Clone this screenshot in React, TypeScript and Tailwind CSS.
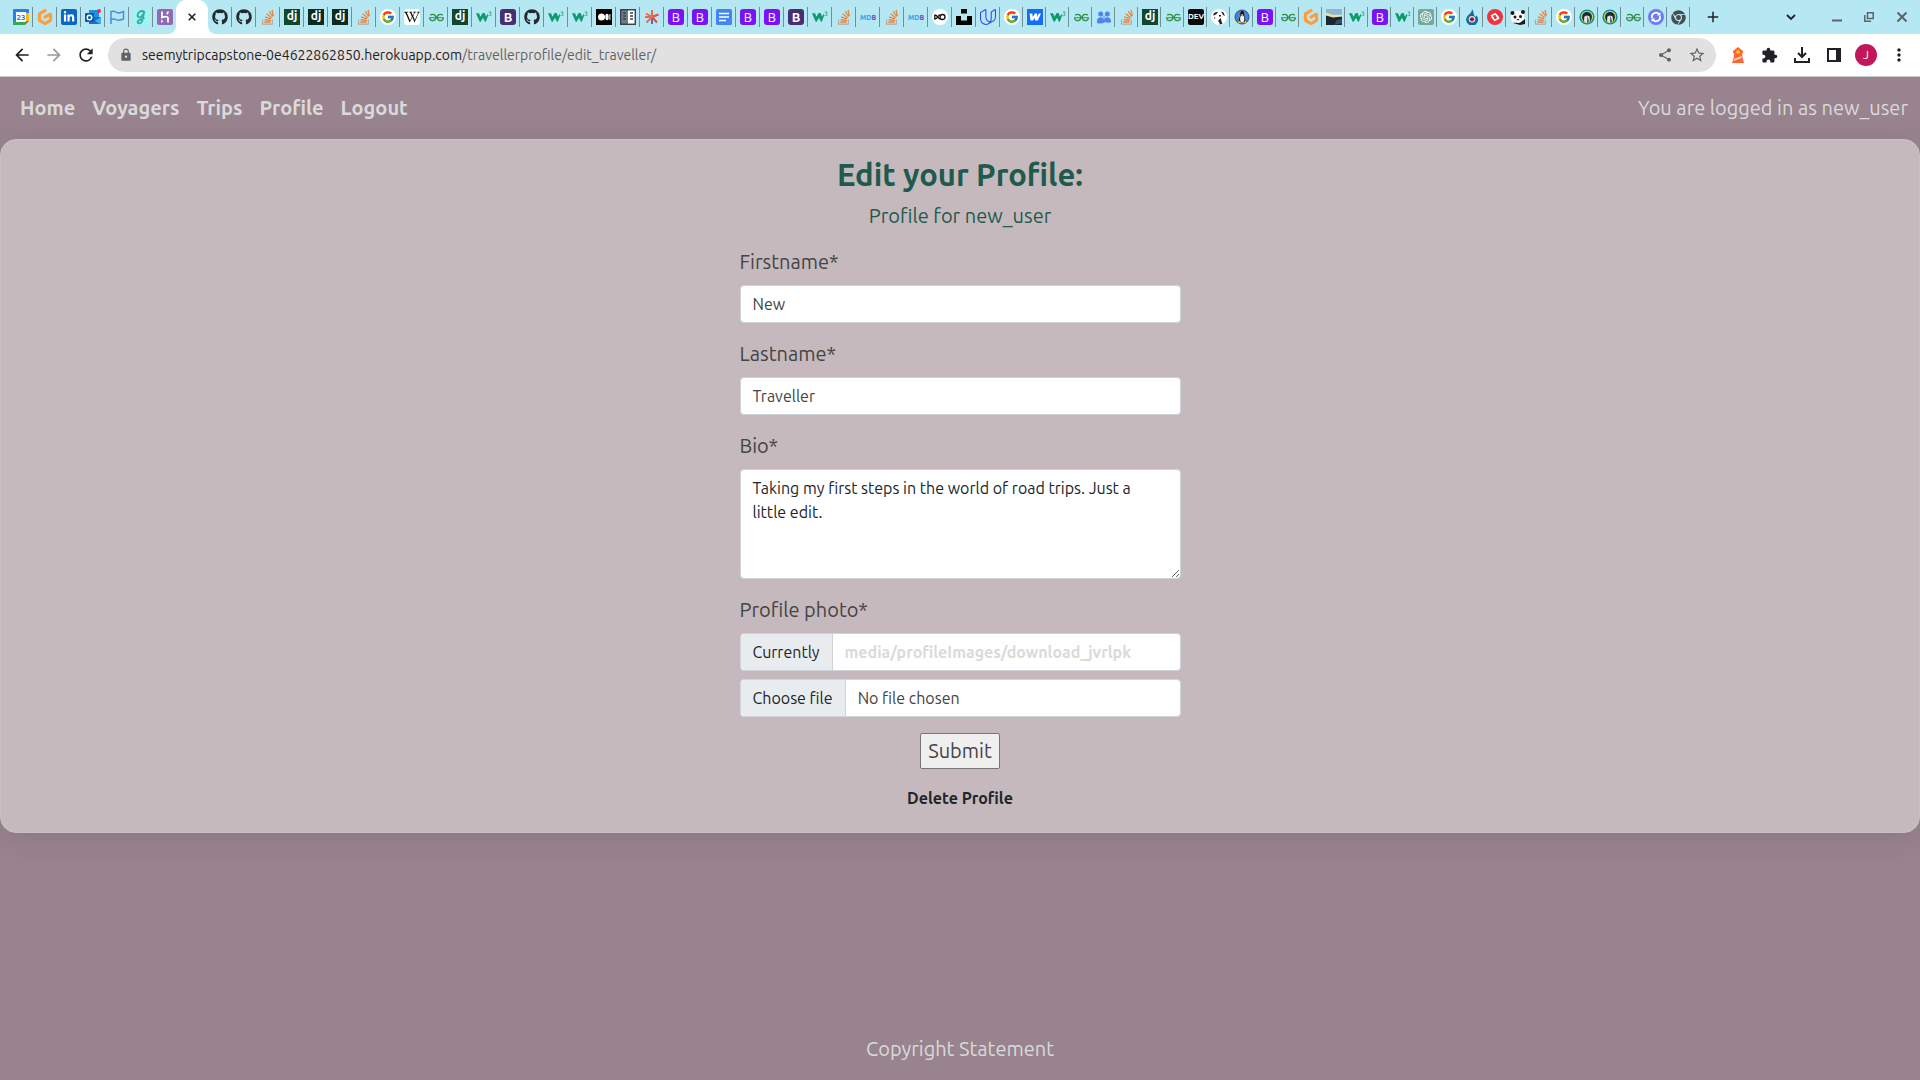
import type { ReactNode } from "react";
import { FaChrome, FaGithub, FaLinkedinIn, FaWikipediaW } from "react-icons/fa";
import { FcGoogle } from "react-icons/fc";
import { SiGeeksforgeeks, SiGitpod, SiOpenai, SiUdacity } from "react-icons/si";
import { MdArrowBack, MdArrowForward, MdExtension, MdLock, MdMoreVert, MdRefresh, MdShare, MdStarBorder, MdAdd } from "react-icons/md";

function Tile({ className, children }: { className: string; children?: ReactNode }) {
  return (
    <span className={`flex size-4 items-center justify-center overflow-hidden leading-none ${className}`}>
      {children}
    </span>
  );
}

const Svg = ({ children }: { children: ReactNode }) => (
  <svg viewBox="0 0 16 16" className="size-4">{children}</svg>
);

const github = <FaGithub className="size-4 text-[#24292f]" />;
const stack = (
  <Svg>
    <path d="M2.5 10.500v4.700h9.800v-4.700" fill="none" stroke="#b5a9a0" strokeWidth="1.200" />
    <path d="M4.300 13h6.200M4.500 10.600l6.100.9M5.100 7.800l5.900 2M6.600 4.800l5.100 3.900M9.200 2.300l3.600 5.200M12 .8l1.300 6" fill="none" stroke="#f08038" strokeWidth="1.300" />
  </Svg>
);
const django = (
  <Tile className="bg-[#11472f] pb-[2px] text-[12px] font-bold text-white">dj</Tile>
);
const djangoDark = (
  <Tile className="bg-[#0c2b20] pb-[2px] text-[12px] font-bold text-white">dj</Tile>
);
const google = (
  <Tile className="rounded-full bg-white"><FcGoogle className="size-[14px]" /></Tile>
);
const wiki = (
  <Tile className="rounded-[3px] bg-white"><FaWikipediaW className="size-4 text-[#111]" /></Tile>
);
const gfg = (
  <Tile className=""><SiGeeksforgeeks className="size-[15px] text-[#2f9148]" /></Tile>
);
const w3 = (
  <Svg>
    <path d="M0 4.200h3l1.500 3.600L6.600 4h2l1.500 3.800L11.400 5l1 1.100-2.600 6.700H8.900L7 8.800l-2.300 4h-1z" fill="#0a9c6b" />
    <path d="M12.900 3h2.200l-1.200 1.500c1.600.1 1.600 2.300 0 2.300-.6 0-1-.2-1.200-.6" fill="none" stroke="#2fac80" strokeWidth=".9" />
  </Svg>
);
const bootDark = (
  <Tile className="rounded-[3px] bg-[#4a2c73] text-[13px] font-bold text-white">B</Tile>
);
const boot = (
  <Tile className="rounded-[3px] bg-[#7a12f5] text-[13px] text-white">B</Tile>
);
const gitpod = <SiGitpod className="size-4 text-[#ff9d3c]" />;
const mdb = (
  <Tile className="text-[7px] font-extrabold text-[#35a5e0]">MD<span className="text-[#6556c8]">B</span></Tile>
);
const fellow = (
  <Svg>
    <circle cx="8" cy="8" r="7.600" fill="#0c8a93" />
    <circle cx="8" cy="8" r="6.200" fill="#b9d84b" />
    <path d="M3.200 9C2.700 5.500 5 3 8 3s5.300 2.500 4.800 6L11.500 12.500h-7z" fill="#1b2a3c" />
    <path d="M5.400 7.500 8 6.400l2.600 1.100.4 4.500c-1.500 2-4.500 2-6 0z" fill="#e8e4df" />
    <path d="M8 6.500 10.500 13 8 14z" fill="#5c6672" />
  </Svg>
);

const calendar = (
  <Svg>
    <path d="M0 1a1 1 0 0 1 1-1h14a1 1 0 0 1 1 1v3H0z" fill="#2f7de1" />
    <path d="M0 4h4v12H1a1 1 0 0 1-1-1z" fill="#2f7de1" />
    <path d="M12 4h4v8h-4z" fill="#fbbc04" />
    <path d="M0 12h12v4H1a1 1 0 0 1-1-1z" fill="#35a853" />
    <path d="M12 12h4l-4 4z" fill="#ea4335" />
    <path d="M3 3h10v10H3z" fill="#fff" />
    <text x="8" y="11" textAnchor="middle" fontSize="8" fontWeight="700" fill="#2f6fd0">23</text>
  </Svg>
);
const outlook = (
  <Svg>
    <path d="M4 1h10v14H4z" fill="#1f8fe0" />
    <path d="M4 8h12v7H4z" fill="#1a6fc4" />
    <path d="m16 8-6 4 6 3.500z" fill="#37b5f0" />
    <rect y="4" width="9" height="9" rx="1" fill="#0c59a8" />
    <circle cx="4.500" cy="8.500" r="2.300" fill="none" stroke="#fff" strokeWidth="1.400" />
    <circle cx="14" cy="2" r="2" fill="#e5323e" />
  </Svg>
);
const flag = (
  <Svg>
    <path d="M2 15V2.500c4-1.500 5 1.500 7.500 1.500 2 0 3.500-1 5-1.500v7.500c-2 .8-3.500 1.200-5 1.200C7 11.200 6 9 2 10.500" fill="none" stroke="#4f8bdc" strokeWidth="1.500" />
  </Svg>
);
const scriptG = (
  <Svg>
    <path d="M0 0h16v16H0z" fill="#9ff5f0" />
    <path d="M11.500 4C11 1 6.500 1.500 5 4.500 3.500 8 6.500 9.500 8.500 7.500c1.500-1.400 2-3 2.500-4-.5 3-1 6.500-2 9-1 2.500-4.500 2.500-4.500.3 0-2 4.500-2.300 7-3.800" fill="none" stroke="#3aa9a8" strokeWidth="1.800" />
  </Svg>
);
const heroku = (
  <Svg>
    <rect width="16" height="16" rx="2" fill="#9068b3" />
    <path d="M5 2.500v6c2-.8 6-1.800 6 .8v4.200M11 2.500c0 1-.4 1.800-1.200 2.600" fill="none" stroke="#fff" strokeWidth="1.800" />
    <path d="m4.200 10.500 2.200 1.700-2.200 1.700z" fill="#fff" />
  </Svg>
);
const medium = (
  <Svg>
    <path d="M0 0h16v16H0z" />
    <circle cx="5.500" cy="8" r="3.500" fill="#fff" />
    <ellipse cx="11" cy="8" rx="1.700" ry="3.200" fill="#fff" />
    <path d="M13.900 5v6" stroke="#fff" />
  </Svg>
);
const columns = (
  <Svg>
    <path d="M.7.700h14.600v14.600H.7z" fill="#6f7c88" stroke="#37424d" strokeWidth="1.400" />
    <path d="M8 1.500h6.500v13H8z" fill="#fff" />
    <path d="M3 4h3M3 7h3M3 10h3M10 4h3M10 7h3M10 10h3" stroke="#37424d" strokeWidth="1.400" />
  </Svg>
);
const asterisk = (
  <Svg>
    <path d="M8 1v7M2 4.500 8 8" stroke="#f0693c" strokeWidth="2" />
    <path d="m14.500 5.500-6.500 2.500M8 8l5 5.500" stroke="#e04a4f" strokeWidth="2" />
    <path d="M8 8v7" stroke="#6a62b8" strokeWidth="2" />
    <path d="m2.500 13.500 5.500-5.500H1" fill="none" stroke="#ee6b4a" strokeWidth="2" />
  </Svg>
);
const docs = (
  <Svg>
    <rect width="16" height="16" rx="1.500" fill="#4285f4" />
    <path d="M3 4.500h10M3 8h10M3 11.500h7" stroke="#fff" strokeWidth="1.500" />
  </Svg>
);
const infinity = (
  <Svg>
    <circle cx="8" cy="8" r="8" fill="#fff" />
    <path d="M2.800 5.800v4.400c2.700 0 3.200-4.400 5.200-4.400M2.800 5.800c2.700 0 3 4.400 5.900 4.400" fill="none" stroke="#111" strokeWidth="1.300" />
    <circle cx="10.500" cy="8" r="2.500" fill="none" stroke="#111" strokeWidth="1.300" />
  </Svg>
);
const unsplash = (
  <Svg><path d="M5 0h6v4.500H5zM0 7h5v4.500h6V7h5v9H0z" /></Svg>
);
const udacity = <SiUdacity className="size-4 text-[#3545e8]" />;
const webflow = (
  <Svg>
    <path d="M0 0h16v16H0z" fill="#146ef5" />
    <path d="M2.500 4.500h2.700l.6 3.500 2-3.500H10l.3 3.500 1.500-3.500H14l-3.200 7H8.200l-.3-2.500-2 2.500H3.500z" fill="#fff" />
  </Svg>
);
const people = (
  <Svg>
    <circle cx="4.700" cy="5" r="2.500" fill="#4d84ee" />
    <circle cx="11.300" cy="5" r="2.500" fill="#4d84ee" />
    <path d="M1 14v-2c0-5 7-4.500 7-1 0-3.500 7-4 7 1v1c-2 1.200-4 1-6 0-2 1.500-4 2-8 1" fill="#4d84ee" />
    <circle cx="8" cy="8" r="1.400" fill="#8db2f6" />
  </Svg>
);
const dev = (
  <Tile className="rounded-[2px] bg-[#0a0a0a] text-[8px] font-bold text-white">DEV</Tile>
);
const hound = (
  <Svg>
    <circle cx="8" cy="8" r="8" fill="#fff" />
    <path d="M2 6.500C2.500 3.500 5 2.500 7 3L5.500 5 4 6zM10 2.500l2.500 1L14 7l-2-1zM7 12c1 1 2 2 1.500 3.500l3-.8C10.500 13.500 10.500 11 9.500 9zM8 6h2v1.500H8zM3 8l1.500 1-1 1z" fill="#222" />
  </Svg>
);
const tux = (
  <Svg>
    <circle cx="8" cy="8" r="7" fill="#4d82cc" stroke="#25508f" />
    <path d="M5 12.500c-1-2 1-4 1.300-6C6.200 3 6.700 2 8.200 2s2 1.300 2 4c.2 2.500 1.800 4.500 1 6.500z" fill="#15181e" />
    <ellipse cx="8.200" cy="9.800" rx="2.100" ry="3.500" fill="#f5f5f5" />
    <path d="M7 5h2.200l-1 1.500zM4.500 11.500l3 2.500-3.500.3zM11.500 11.500l1.200 2.500-3 .3z" fill="#efb72d" />
  </Svg>
);
const photo = (
  <Svg>
    <path d="M0 0h16v16H0z" fill="#1c2830" />
    <path d="M0 0h16v7.500L11 7 7 8 0 5z" fill="#8fb6cc" />
    <path d="M0 3.500 7 6l9-.5v2L7 8.500 0 6.500z" fill="#ece0b4" />
    <path d="m11 11 5-1v4l-8 2z" fill="#305270" />
  </Svg>
);
const gpt = (
  <Tile className="rounded-[2px] bg-[#74aa9c]"><SiOpenai className="size-3 text-white" /></Tile>
);
const flame = (
  <Svg>
    <path d="M8 0c0 3-1.500 4-3 5.500A6 6 0 1 0 12.500 6.500L11 8C9 5 10 2 8 0" fill="#17699b" />
    <circle cx="8" cy="10.300" r="3.300" fill="#d7e6ec" />
    <circle cx="8" cy="10.300" r="2.100" fill="#a8171f" />
  </Svg>
);
const redBadge = (
  <Svg>
    <circle cx="8" cy="8" r="8" fill="#f4323c" />
    <path d="M11.500 8.500 8.200 4.700 4.500 6.800l2 2.200M4.500 7.500l3.300 3.800 3.700-2.100-2-2.200" fill="none" stroke="#fff" strokeWidth="1.500" />
  </Svg>
);
const panda = (
  <Svg>
    <path d="M1 9C0 4 4 1 8 2c4-.5 7 3 6 7 1 4-2 6-6 5.500C3 15 1 12 1 9" fill="#f7f7f7" />
    <circle cx="2.500" cy="4" r="2" fill="#191919" />
    <circle cx="13" cy="3" r="2" fill="#191919" />
    <circle cx="5" cy="8" r="1.500" fill="#191919" />
    <circle cx="10.500" cy="7.500" r="1.500" fill="#191919" />
    <path d="M6.500 10h3L8 11.500zM3 14c3-1 6 1 8-1l4-3v5l-5 1z" fill="#191919" />
  </Svg>
);
const orb = (
  <Svg>
    <circle cx="8" cy="8" r="8" fill="#6b7cf6" />
    <path d="M4.300 9A3.800 3.800 0 0 1 11 5.500M11.700 7A3.800 3.800 0 0 1 5 10.500" fill="none" stroke="#fff" strokeWidth="1.800" />
    <path d="M9 6.500h3.500V3zM7 9.500H3.500V13z" fill="#fff" />
  </Svg>
);
const chrome = <FaChrome className="size-[15px] text-[#474c50]" />;
const linkedin = (
  <Tile className="rounded-[2px] bg-[#0a66c2]"><FaLinkedinIn className="size-3 text-white" /></Tile>
);

const pinnedTabs = [calendar, gitpod, linkedin, outlook, flag, scriptG, heroku];
const wideTabs = [
  github, github, stack, django, djangoDark, djangoDark, stack, google, wiki, gfg, django,
  w3, bootDark, github, w3, w3, medium, columns, asterisk, boot, boot, docs, boot, boot,
  bootDark, w3, stack, mdb, stack, mdb, infinity, unsplash, udacity,
];
const narrowTabs = [
  google, webflow, w3, gfg, people, stack, django, gfg, dev, hound, tux, boot, gfg, gitpod,
  photo, w3, boot, w3, gpt, google, flame, redBadge, panda, stack, google, fellow, fellow,
  gfg, orb, chrome,
];

function Tab({ width, divider = true, children }: { width: string; divider?: boolean; children: ReactNode }) {
  return (
    <button
      type="button"
      className={`flex h-5 shrink-0 items-center border-r pl-1 ${width} ${divider ? "border-[#6f9099]" : "border-transparent"}`}
    >
      {children}
    </button>
  );
}

function TabStrip() {
  return (
    <div className="flex h-[34px] items-center bg-[#b5e8f3] pl-[9px]">
      {pinnedTabs.map((icon, i) => (
        <Tab key={i} width={i < pinnedTabs.length - 1 ? "w-6" : "w-[23px]"} divider={i < pinnedTabs.length - 1}>{icon}</Tab>
      ))}
      <div className="relative flex h-full w-8 shrink-0 items-center justify-center rounded-t-[10px] bg-white">
        <svg viewBox="0 0 8 8" className="absolute bottom-0 -left-2 size-2 fill-white"><path d="M8 0v8H0a8 8 0 0 0 8-8" /></svg>
        <svg viewBox="0 0 8 8" className="absolute -right-2 bottom-0 size-2 fill-white"><path d="M0 0v8h8a8 8 0 0 1-8-8" /></svg>
        <button type="button" aria-label="Close tab">
          <svg viewBox="0 0 8 8" className="size-2"><path d="m.7.700 6.600 6.600m0-6.600L.7 7.300" stroke="#202124" strokeWidth="1.600" /></svg>
        </button>
      </div>
      {wideTabs.map((icon, i) => <Tab key={i} width="w-6">{icon}</Tab>)}
      {narrowTabs.map((icon, i) => <Tab key={i} width="w-[23px]">{icon}</Tab>)}
      <button type="button" aria-label="New tab" className="ml-[14px]"><MdAdd className="size-[18px] text-[#202124]" /></button>
      <div className="ml-auto flex items-center pr-[11px] text-[#5f6368]">
        <button type="button" aria-label="Search tabs" className="mr-9">
          <svg viewBox="0 0 10 10" className="size-[10px]"><path d="m1 3 4 4 4-4" fill="none" stroke="#202124" strokeWidth="1.800" /></svg>
        </button>
        <button type="button" aria-label="Minimize" className="mr-[22px]">
          <svg viewBox="0 0 10 10" className="size-[10px]"><path d="M0 8.500h10" stroke="currentColor" strokeWidth="2" /></svg>
        </button>
        <button type="button" aria-label="Restore" className="mr-[21px]">
          <svg viewBox="0 0 10 10" className="size-[10px]" fill="none" stroke="currentColor" strokeWidth="1.500"><path d="M3.500.800h5.700v5.700H3.500zM.8 3v6.200H7" /></svg>
        </button>
        <button type="button" aria-label="Close">
          <svg viewBox="0 0 14 14" className="size-[14px]"><path d="m2.500 2.500 9 9m0-9-9 9" stroke="currentColor" strokeWidth="2" /></svg>
        </button>
      </div>
    </div>
  );
}

function Toolbar() {
  return (
    <div className="flex h-[43px] items-center border-b border-[#c9cccf] bg-white text-[#202124]">
      <div className="flex items-center gap-3 pl-3">
        <button type="button" aria-label="Back"><MdArrowBack className="size-5" /></button>
        <button type="button" aria-label="Forward"><MdArrowForward className="size-5 text-[#9a9a9a]" /></button>
        <button type="button" aria-label="Reload"><MdRefresh className="size-5" /></button>
      </div>
      <div className="ml-3 flex h-[34px] flex-1 items-center rounded-full bg-[#e1e1e1] pr-[10px] pl-[11px] text-[#5f6368]">
        <MdLock className="mr-[9px] size-[14px]" />
        <p className="flex-1 text-[14px] leading-5">
          <span className="text-[#202124]">seemytripcapstone-0e4622862850.herokuapp.com</span>
          /travellerprofile/edit_traveller/
        </p>
        <button type="button" aria-label="Share" className="mr-[15px]"><MdShare className="size-4" /></button>
        <button type="button" aria-label="Bookmark"><MdStarBorder className="size-[18px]" /></button>
      </div>
      <div className="flex items-center pr-[11px] pl-[14px]">
        <button type="button" aria-label="Lighthouse" className="mr-[15px]">
          <svg viewBox="0 0 16 18" className="h-[18px] w-4">
            <path d="m8 1 5 4v2h-1l.7 5.500L14 17H2l1.500-4.500L4 7H3V5z" fill="#ff6633" />
            <path d="m4 13 7.500-3v2L3.500 15z" fill="#ffd3b5" />
            <circle cx="8" cy="6" r="1.800" fill="#ffd21f" />
          </svg>
        </button>
        <button type="button" aria-label="Extensions" className="mr-[15px]"><MdExtension className="size-[17px]" /></button>
        <button type="button" aria-label="Downloads" className="mr-[15px]">
          <svg viewBox="0 0 18 18" className="size-[18px]" fill="none" stroke="currentColor" strokeWidth="2"><path d="M9 1v9M5 7l4 4 4-4M2 12v4h14v-4" /></svg>
        </button>
        <button type="button" aria-label="Side panel" className="mr-[13px]">
          <svg viewBox="0 0 16 16" className="size-4"><path d="M2 2h12v12H2z" fill="none" stroke="currentColor" strokeWidth="2" /><path d="M10 2h4v12h-4z" fill="currentColor" /></svg>
        </button>
        <button type="button" className="mr-3 flex size-[22px] items-center justify-center rounded-full bg-[#c2185b] text-[12px] leading-none text-white">J</button>
        <button type="button" aria-label="Menu"><MdMoreVert className="size-5" /></button>
      </div>
    </div>
  );
}

const inputClass = "block h-[38px] w-full rounded-[4px] border border-[#ced4da] bg-white px-3 text-[16px] leading-6 text-[#444]";
const labelClass = "mb-2 block text-[20px] leading-[30px] text-[#444]";

function EditProfile() {
  return (
    <main className="rounded-2xl border border-[#cabfc2] bg-[#c5b9bd] px-4 pt-4 pb-[22px] shadow-[0_4px_30px_rgba(0,0,0,0.1)]">
      <h1 className="mb-[7px] text-center text-[31px] leading-[38px] font-bold text-[#1f5a4e]">Edit your Profile:</h1>
      <p className="mb-4 text-center text-[20px] leading-[30px] text-[#1f5a4e]">Profile for new_user</p>
      <form className="mx-auto w-[441px] max-w-full" onSubmit={(e) => e.preventDefault()}>
        <div className="mb-4">
          <label htmlFor="firstname" className={labelClass}>Firstname*</label>
          <input id="firstname" type="text" defaultValue="New" className={inputClass} />
        </div>
        <div className="mb-4">
          <label htmlFor="lastname" className={labelClass}>Lastname*</label>
          <input id="lastname" type="text" defaultValue="Traveller" className={inputClass} />
        </div>
        <div className="mb-4">
          <label htmlFor="bio" className={labelClass}>Bio*</label>
          <textarea
            id="bio"
            rows={4}
            defaultValue="Taking my first steps in the world of road trips. Just a little edit."
            className="block w-full resize-y rounded-[4px] border border-[#ced4da] bg-white px-3 py-[6px] text-[16px] leading-6 text-[#212529]"
          />
        </div>
        <div className="mb-4">
          <label htmlFor="photo" className={labelClass}>Profile photo*</label>
          <div className="mb-2 flex h-[38px] items-stretch overflow-hidden rounded-[4px] border border-[#ced4da] bg-white text-[16px] leading-9">
            <span className="border-r border-[#ced4da] bg-[#e9ecef] px-3 text-[#212529]">Currently</span>
            <a href="#photo" className="px-3 font-bold text-[#dadada]">media/profileImages/download_jvrlpk</a>
          </div>
          <label className="flex h-[38px] cursor-pointer items-stretch overflow-hidden rounded-[4px] border border-[#ced4da] bg-white text-[16px] leading-9">
            <input id="photo" type="file" className="sr-only" />
            <span className="border-r border-[#ced4da] bg-[#e9ecef] px-3 text-[#212529]">Choose file</span>
            <span className="px-3 text-[#444]">No file chosen</span>
          </label>
        </div>
        <div className="flex flex-col items-center gap-[17px]">
          <button type="submit" className="h-9 rounded-[2px] border border-[#767676] bg-[#efefef] px-[7px] text-[20px] leading-[30px] text-[#444]">Submit</button>
          <a href="#delete" className="text-[16px] leading-6 font-bold text-[#212529]">Delete Profile</a>
        </div>
      </form>
    </main>
  );
}

export default function App() {
  return (
    <div className="flex min-h-screen flex-col bg-[#99838e] font-['Ubuntu','Noto_Sans',sans-serif]">
      <TabStrip />
      <Toolbar />
      <header className="flex h-[62px] items-center justify-between pr-3 pl-5 text-[20px] leading-[30px] text-[#dadada]">
        <nav className="flex gap-[17px] font-bold">
          <a href="#home">Home</a>
          <a href="#voyagers">Voyagers</a>
          <a href="#trips">Trips</a>
          <a href="#profile">Profile</a>
          <a href="#logout">Logout</a>
        </nav>
        <p>You are logged in as new_user</p>
      </header>
      <EditProfile />
      <footer className="mt-auto pb-4 text-center text-[20px] leading-[30px] text-[#dadada]">Copyright Statement</footer>
    </div>
  );
}
